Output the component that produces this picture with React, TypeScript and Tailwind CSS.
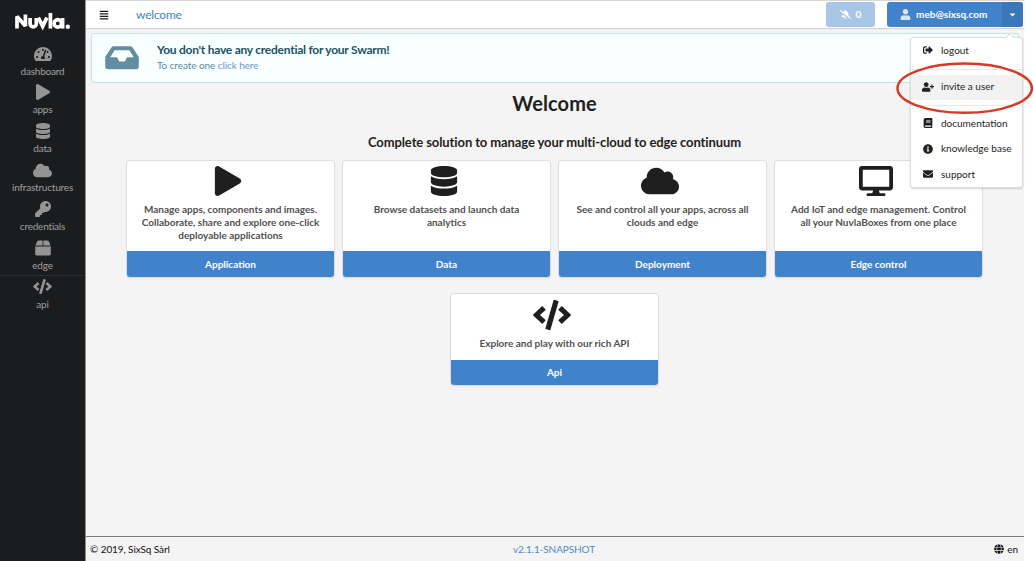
import React from "react";
import {
  FaAlignJustify, FaBellSlash, FaBook, FaCaretDown, FaCloud, FaCode, FaDatabase, FaDesktop,
  FaEnvelope, FaGlobe, FaInfoCircle, FaKey, FaPlay, FaSignOutAlt, FaTachometerAlt, FaUser, FaUserPlus,
} from "react-icons/fa";
import type { IconType } from "react-icons";

function BoxIcon({ size = 16 }: { size?: number | string }) {
  return (
    <svg width={size} height={size} viewBox="0 0 16 16" fill="currentColor">
      <path d="M3.600.4h4v5.200H.3L2.200 1.400q.4-1 1.400-1zM8.400.4h4q1 0 1.400 1l1.900 4.200H8.400zM.2 6.400h15.600v7.600q0 1.600-1.600 1.600H1.800Q.2 15.600.2 14z" />
    </svg>
  );
}

const nav: { icon: IconType | typeof BoxIcon; label: string; size: number }[] = [
  { icon: FaTachometerAlt, label: "dashboard", size: 18 },
  { icon: FaPlay, label: "apps", size: 16 },
  { icon: FaDatabase, label: "data", size: 16 },
  { icon: FaCloud, label: "infrastructures", size: 19 },
  { icon: FaKey, label: "credentials", size: 16 },
  { icon: BoxIcon, label: "edge", size: 16 },
  { icon: FaCode, label: "api", size: 19 },
];

function Logo() {
  return (
    <svg width="57" height="20" viewBox="0 0 57 20" fill="none" stroke="#fff" strokeWidth="3.700">
      <path d="M3 16.6V4.600L11.400 14V2.400" strokeLinejoin="bevel" />
      <path d="M16.100 6v5.800a3.100 3.100 0 0 0 6.200 0V6" />
      <path d="M24.300 5.600l4.400 8.800 4.200-8.800" />
      <path d="M36.400 1v15.600" />
      <circle cx="43.800" cy="11.400" r="3.700" />
      <path d="M48.600 6v10.600" />
      <circle cx="53.800" cy="14.700" r="2.200" fill="#fff" stroke="none" />
    </svg>
  );
}

function InboxIcon() {
  return (
    <svg width="34" height="24" viewBox="0 0 34 24" fill="#638ea2">
      <path
        fillRule="evenodd"
        d="M8.2 .3h17.6q1 0 1.6.9l5.8 8.7q.6.9.6 2v8.9q0 2.4-2.4 2.4H2.6Q.2 23.200.2 20.8v-8.900q0-1.100.6-2L6.600 1.200q.6-.9 1.600-.9zM9.600 4.300L5.300 11.300h6.700l2.200 4.200h5.600l2.200-4.200h6.700L24.400 4.300z"
      />
    </svg>
  );
}

function Sidebar() {
  return (
    <nav className="flex w-[85px] shrink-0 flex-col items-center bg-[#1b1c1d]">
      <div className="flex h-[43px] shrink-0 items-start pt-[12px]"><Logo /></div>
      {nav.map(({ icon: Icon, label, size }) => (
        <div
          key={label}
          className={`flex h-[38.9px] w-full shrink-0 flex-col items-center text-[#a0a0a1] ${label === "api" ? "shadow-[0_-1px_0_#2c2d2e]" : ""}`}
        >
          <span className="flex h-[21px] items-center text-[#949495]"><Icon size={size} /></span>
          <span className="-mt-[0.5px] text-[10px] leading-[14px] tracking-[-0.2px]">{label}</span>
        </div>
      ))}
    </nav>
  );
}

function Header() {
  return (
    <header className="flex h-[28px] shrink-0 items-center border-t border-[#d8d8d8] bg-white pl-[13px] pr-[1px] shadow-[0_1px_1px_#d4d4d5]">
      <FaAlignJustify size={10} color="#222" />
      <span className="ml-[27px] text-[12px] tracking-[-0.2px] text-[#4183c4]">welcome</span>
      <div className="ml-auto flex h-[25px] w-[49px] items-center justify-center gap-[5px] rounded-[3px] bg-[#a9c6e6] text-[10px] font-bold text-white">
        <FaBellSlash size={11} />0
      </div>
      <div className="ml-[12px] flex h-[25px] w-[136px] rounded-[3px] bg-[#4183cb] text-[10px] font-bold text-white">
        <div className="flex flex-1 items-center gap-[5px] pl-[13px]">
          <FaUser size={11} color="#d6e4f4" />meb@sixsq.com
        </div>
        <div className="flex w-[21px] items-center justify-center rounded-r-[3px] bg-[#3b77b9]"><FaCaretDown size={9} /></div>
      </div>
    </header>
  );
}

function Message() {
  return (
    <div className="mx-[5px] mt-[5px] flex h-[50px] shrink-0 items-center rounded-[3px] border border-[#c5e2e6] bg-[#f8ffff] pl-[13px]">
      <InboxIcon />
      <div className="-mt-[1px] ml-[18px]">
        <div className="text-[12px] leading-[16px] font-bold tracking-[-0.25px] text-[#1b5265]">You don't have any credential for your Swarm!</div>
        <div className="text-[10px] leading-[15px] tracking-[-0.08px] text-[#5b8ba0]">To create one <a className="text-[#6b98d2]">click here</a></div>
      </div>
    </div>
  );
}

interface CardProps {
  icon: IconType;
  size: number;
  text: string;
  title: string;
  tall?: boolean;
}

function Card({ icon: Icon, size, text, title, tall = true }: CardProps) {
  return (
    <div className="flex w-[207px] flex-col overflow-hidden rounded-[3px] bg-white shadow-[0_0_0_1px_#dededf,0_1px_2px_#d4d4d5]">
      <div className={`flex flex-col items-center px-[13px] ${tall ? "h-[90px] pt-[3px]" : "h-[66px] pt-[4px]"}`}>
        <span className="mr-[6px] flex h-[34px] items-center text-[#1f1f20]"><Icon size={size} /></span>
        <p className="mt-[5px] text-center text-[10px] leading-[12.8px] font-bold text-[#505051]">{text}</p>
      </div>
      <div className={`flex items-center justify-center bg-[#4183cb] text-[10px] font-bold text-white ${tall ? "h-[26px]" : "h-[25px]"}`}>{title}</div>
    </div>
  );
}

const menuItem = "flex h-[25.5px] items-center gap-[8px] pl-[12px] pb-[1px] text-[10px] text-[#222]";

function UserMenu() {
  return (
    <div className="absolute top-[37px] left-[910px] h-[151px] w-[113px] rounded-[3px] border border-[#dcdcdd] bg-white shadow-[0_1px_2px_rgba(34,36,38,0.18)]">
      <div className="absolute -top-[4px] right-[9px] h-[6px] w-[6px] rotate-45 border-t border-l border-[#dcdcdd] bg-white" />
      <div className={menuItem}><FaSignOutAlt size={10} />logout</div>
      <div className="my-[5px] h-px bg-[#eaeaea]" />
      <div className={`${menuItem} bg-[#f2f2f2]`}><FaUserPlus size={12} className="-mx-[1px]" />invite a user</div>
      <div className="my-[5px] h-px bg-[#eaeaea]" />
      <div className={menuItem}><FaBook size={10} />documentation</div>
      <div className={menuItem}><FaInfoCircle size={10} />knowledge base</div>
      <div className={menuItem}><FaEnvelope size={10} />support</div>
    </div>
  );
}

export default function App() {
  return (
    <div className="relative flex h-[561px] w-[1034px] overflow-hidden bg-white font-[Lato,sans-serif]">
      <Sidebar />
      <div className="flex w-[939px] flex-col border-l border-[#8b8b8c] bg-[#f4f4f4]">
        <Header />
        <Message />
        <main className="flex flex-1 flex-col items-center pr-[1px]">
          <h1 className="mt-[7px] text-[20px] leading-[26px] font-bold tracking-[0.1px] text-[#1f1f20]">Welcome</h1>
          <h2 className="mt-[17px] text-[13px] leading-[18px] font-bold tracking-[-0.1px] text-[#1f1f20]">Complete solution to manage your multi-cloud to edge continuum</h2>
          <div className="mt-[10px] flex gap-[9px]">
            <Card icon={FaPlay} size={30} title="Application" text="Manage apps, components and images. Collaborate, share and explore one-click deployable applications" />
            <Card icon={FaDatabase} size={30} title="Data" text="Browse datasets and launch data analytics" />
            <Card icon={FaCloud} size={38} title="Deployment" text="See and control all your apps, across all clouds and edge" />
            <Card icon={FaDesktop} size={34} title="Edge control" text="Add IoT and edge management. Control all your NuvlaBoxes from one place" />
          </div>
          <div className="mt-[17px]">
            <Card icon={FaCode} size={38} title="Api" text="Explore and play with our rich API" tall={false} />
          </div>
        </main>
        <footer className="grid h-[25px] shrink-0 grid-cols-3 items-center border-t border-[#7c7c7d] pr-[6px] pl-[4px] text-[10px] tracking-[-0.1px] text-[#111]">
          <span>© 2019, SixSq Sàrl</span>
          <span className="text-center text-[#4c8ac8]">v2.1.1-SNAPSHOT</span>
          <span className="flex items-center justify-end gap-[3px]"><FaGlobe size={10} />en</span>
        </footer>
      </div>
      <UserMenu />
      <svg className="absolute top-[60px] left-[894px]" width="140" height="56" viewBox="0 0 140 56" fill="none">
        <ellipse cx="70.7" cy="28.2" rx="67.2" ry="24.6" stroke="#d93a25" strokeWidth="2.5" />
      </svg>
    </div>
  );
}
